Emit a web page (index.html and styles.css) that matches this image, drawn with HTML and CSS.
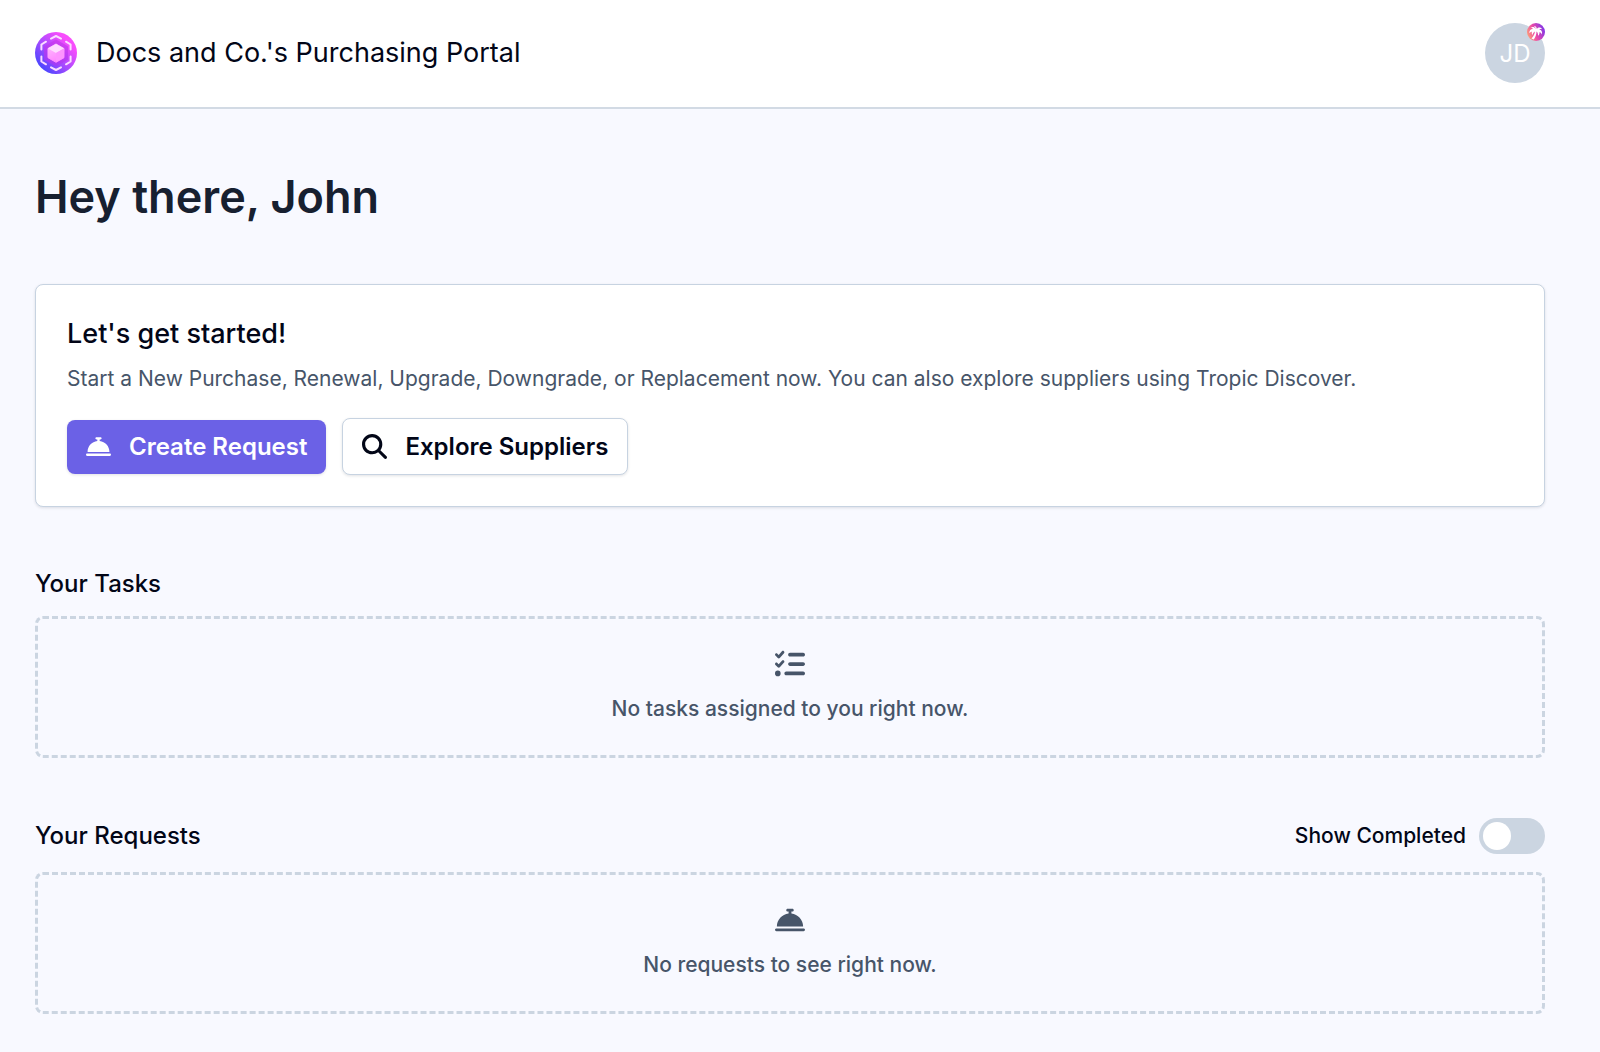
FILE: index.html
```html
<!DOCTYPE html>
<html lang="en">
<head>
<meta charset="utf-8">
<meta name="viewport" content="width=device-width, initial-scale=1">
<title>Purchasing Portal</title>
<link rel="stylesheet" href="styles.css">
</head>
<body>
<svg class="sprite" aria-hidden="true">
  <symbol id="bell" viewBox="0 0 512 512">
    <path d="M216 64c-13.3 0-24 10.7-24 24s10.7 24 24 24h16v33.3C119.600 157.200 32 252.400 32 368H480c0-115.600-87.600-210.800-200-222.700V112h16c13.300 0 24-10.700 24-24s-10.700-24-24-24H216zM24 400c-13.300 0-24 10.700-24 24s10.700 24 24 24H488c13.300 0 24-10.700 24-24s-10.700-24-24-24H24z"/>
  </symbol>
</svg>
<header class="topbar">
  <div class="brand">
    <svg class="brand-logo" viewBox="0 0 42 42" aria-hidden="true">
      <defs>
        <linearGradient id="disc" x1="0.1" y1="0.9" x2="0.85" y2="0.15">
          <stop offset="0" stop-color="#3d45ff"/><stop offset="0.45" stop-color="#a44bff"/><stop offset="0.9" stop-color="#f84dfc"/>
        </linearGradient>
        <linearGradient id="core" x1="0.2" y1="1" x2="0.8" y2="0">
          <stop offset="0" stop-color="#9a3cf8"/><stop offset="1" stop-color="#d440f0"/>
        </linearGradient>
        <linearGradient id="face" x1="0" y1="0" x2="0.4" y2="1">
          <stop offset="0" stop-color="#ffc0ff"/><stop offset="1" stop-color="#ff86ff"/>
        </linearGradient>
      </defs>
      <circle cx="21" cy="21" r="21" fill="url(#disc)"/>
      <path d="M21 8.500L32 14.800V27.200L21 33.500L10 27.200V14.800Z" fill="url(#core)" stroke="url(#core)" stroke-width="2" stroke-linejoin="round"/>
      <path d="M21 12L29 16.500V25.700L21 30.300L13 25.700V16.500Z" fill="url(#face)" stroke="url(#face)" stroke-linejoin="round"/>
      <path d="M21 12L29 16.500L21 21L13 16.500Z" fill="#ffdcff"/>
      <path d="M21 21L29 16.500V25.700L21 30.300Z" fill="#fd94ff"/>
      <g fill="none" stroke="#fbdcff" stroke-width="2" stroke-linecap="round" stroke-linejoin="round">
        <path d="M16 6.600L21 4L26 6.600M16 35.400L21 38L26 35.400"/>
        <path d="M11 9.700L6.400 12.500V17.500M31 9.700L35.600 12.500V17.500"/>
        <path d="M6.400 24.500V29.500L11 32.300M35.600 24.500V29.500L31 32.300"/>
      </g>
    </svg>
    <span class="brand-name">Docs and Co.'s Purchasing Portal</span>
  </div>
  <button class="avatar" type="button" aria-label="Account menu">JD
    <svg class="avatar-badge" viewBox="0 0 18 18" aria-hidden="true">
      <defs>
        <linearGradient id="sunset" x1="0" y1="0.700" x2="1" y2="0.300">
          <stop offset="0" stop-color="#ffa276"/><stop offset="0.450" stop-color="#ea4aa9"/><stop offset="1" stop-color="#7a35ec"/>
        </linearGradient>
      </defs>
      <circle cx="9" cy="9" r="9" fill="url(#sunset)"/>
      <path fill="#fff" d="M9 6.200C7.600 3.800 5 3.600 3.600 4.800C5 4.800 5.400 5.200 5.900 5.900C3.600 5.800 2 7.800 2.300 10.300C3.100 9.100 4.100 8.800 4.900 8.700C4.500 10 4.800 11 5.600 11.900C5.700 10.300 6.400 9.200 7.900 8.400C7.700 10.700 6.700 12.900 4.500 15.400L6.800 16.600C8.600 13.900 9.500 11.400 9.500 8.500C10.700 9.300 11.200 10.800 11 12.800C12.400 11.800 12.700 10.600 12.300 9.300C13.600 9.400 14.300 10.100 14.800 11.400C15.700 9 14.400 6.700 12.300 6.400C13 5.900 13.900 5.900 15.200 6.200C13.900 4.100 11.200 4 9.900 6C9.700 4.200 8.600 3.100 6.900 3C7.900 3.800 8.600 4.900 9 6.200Z"/>
    </svg>
  </button>
</header>
<main class="page">
  <h1 class="greeting">Hey there, John</h1>
  <section class="card">
    <h2 class="card-title">Let's get started!</h2>
    <p class="card-text">Start a New Purchase, Renewal, Upgrade, Downgrade, or Replacement now. You can also explore suppliers using Tropic Discover.</p>
    <div class="actions">
      <button class="button button-primary" type="button">
        <svg class="button-icon" aria-hidden="true"><use href="#bell"/></svg>Create Request
      </button>
      <button class="button button-outline" type="button">
        <svg class="button-icon" viewBox="0 0 512 512" aria-hidden="true"><path d="M416 208c0 45.900-14.900 88.300-40 122.700L502.600 457.400c12.500 12.500 12.500 32.800 0 45.300s-32.800 12.500-45.300 0L330.700 376c-34.400 25.200-76.800 40-122.700 40C93.100 416 0 322.900 0 208S93.100 0 208 0S416 93.100 416 208zM208 352a144 144 0 1 0 0-288 144 144 0 1 0 0 288z"/></svg>Explore Suppliers
      </button>
    </div>
  </section>
  <section class="section">
    <div class="section-head"><h2 class="section-title">Your Tasks</h2></div>
    <div class="empty">
      <svg class="empty-icon" viewBox="0 0 512 512" aria-hidden="true"><path d="M152.100 38.200c9.900 8.900 10.700 24 1.800 33.900l-72 80c-4.400 4.900-10.600 7.800-17.200 7.900s-12.900-2.400-17.600-7L7 113C-2.300 103.600-2.300 88.400 7 79s24.600-9.400 33.900 0l22.100 22.100 55.100-61.200c8.900-9.900 24-10.700 33.900-1.800zm0 160c9.900 8.900 10.700 24 1.800 33.900l-72 80c-4.400 4.900-10.600 7.800-17.200 7.900s-12.900-2.400-17.600-7L7 273c-9.400-9.400-9.400-24.600 0-33.900s24.600-9.400 33.900 0l22.100 22.100 55.100-61.200c8.900-9.900 24-10.700 33.900-1.800zM224 96c0-17.700 14.300-32 32-32H480c17.700 0 32 14.300 32 32s-14.300 32-32 32H256c-17.700 0-32-14.300-32-32zm0 160c0-17.700 14.300-32 32-32H480c17.700 0 32 14.300 32 32s-14.300 32-32 32H256c-17.700 0-32-14.300-32-32zM160 416c0-17.700 14.300-32 32-32H480c17.700 0 32 14.300 32 32s-14.300 32-32 32H192c-17.700 0-32-14.300-32-32zM48 368a48 48 0 1 1 0 96 48 48 0 1 1 0-96z"/></svg>
      <p class="empty-text">No tasks assigned to you right now.</p>
    </div>
  </section>
  <section class="section">
    <div class="section-head section-head-tall">
      <h2 class="section-title">Your Requests</h2>
      <label class="toggle">Show Completed<input class="toggle-input" type="checkbox" role="switch"></label>
    </div>
    <div class="empty">
      <svg class="empty-icon" aria-hidden="true"><use href="#bell"/></svg>
      <p class="empty-text">No requests to see right now.</p>
    </div>
  </section>
</main>
</body>
</html>
```
FILE: styles.css
```css
* { box-sizing: border-box; }

body {
  margin: 0;
  background: #f8f9ff;
  color: #020617;
  font-family: Inter, "Liberation Sans", sans-serif;
  font-size: 21px;
  line-height: 32px;
}

h1, h2, p { margin: 0; }

button { font-family: inherit; cursor: pointer; }

.sprite { display: none; }

.topbar {
  display: flex;
  align-items: center;
  justify-content: space-between;
  padding: 23px 55px 24px 35px;
  background: #fff;
  border-bottom: 2px solid #d2dae4;
}

.brand { display: flex; align-items: center; gap: 19px; }

.brand-logo { width: 42px; height: 42px; }

.brand-name { font-size: 27px; line-height: 36px; }

.avatar {
  position: relative;
  width: 60px;
  height: 60px;
  padding: 0;
  border: 0;
  border-radius: 50%;
  background: #cbd5e1;
  color: #fff;
  font-size: 24px;
}

.avatar-badge {
  position: absolute;
  top: 0;
  right: 0;
  width: 18px;
  height: 18px;
}

.page { padding: 58px 55px 36px 35px; }

.greeting {
  margin-bottom: 57px;
  color: #172030;
  font-size: 45px;
  font-weight: 600;
  line-height: 60px;
}

.card {
  margin-bottom: 61px;
  padding: 31px;
  background: #fff;
  border: 1px solid #c7d3e1;
  border-radius: 8px;
  box-shadow: 0 1px 3px rgba(15, 23, 42, 0.12);
}

.card-title {
  margin-bottom: 11px;
  font-size: 27px;
  font-weight: 500;
  line-height: 36px;
}

.card-text { margin-bottom: 23px; color: #475569; }

.actions { display: flex; align-items: center; gap: 16px; }

.button {
  display: flex;
  align-items: center;
  gap: 18px;
  height: 54px;
  padding: 0 19px;
  border: 0;
  border-radius: 8px;
  font-size: 24px;
  font-weight: 600;
  box-shadow: 0 1px 3px rgba(15, 23, 42, 0.12);
}

.button-primary { background: #6b61e6; color: #fff; }

.button-outline {
  height: 57px;
  background: #fff;
  border: 1px solid #c7d3e1;
  color: #020617;
}

.button-icon { width: 25px; height: 25px; fill: currentColor; }

.section + .section { margin-top: 58px; }

.section-head {
  display: flex;
  align-items: center;
  justify-content: space-between;
  min-height: 32px;
  margin-bottom: 16px;
}

.section-head-tall { min-height: 40px; }

.section-title { font-size: 24px; font-weight: 500; }

.toggle {
  display: flex;
  align-items: center;
  gap: 13px;
  font-weight: 500;
  cursor: pointer;
}

.toggle-input {
  appearance: none;
  display: flex;
  align-items: center;
  width: 66px;
  height: 36px;
  margin: 0;
  padding: 0 4px;
  border-radius: 18px;
  background: #cbd5e1;
  cursor: pointer;
}

.toggle-input::before {
  content: "";
  width: 28px;
  height: 28px;
  border-radius: 50%;
  background: #fff;
}

.toggle-input:checked { justify-content: flex-end; background: #6b61e6; }

.empty {
  display: flex;
  flex-direction: column;
  align-items: center;
  gap: 14px;
  padding: 30px;
  border: 3px dashed #cbd5e1;
  border-radius: 8px;
  color: #475569;
  font-weight: 500;
}

.empty-icon { width: 30px; height: 30px; fill: currentColor; }
```
